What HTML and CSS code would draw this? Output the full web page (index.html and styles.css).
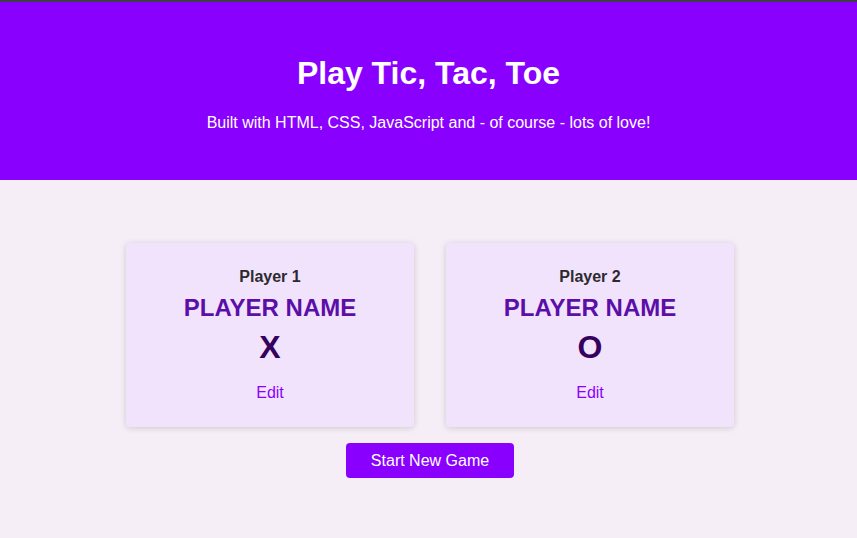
FILE: index.html
```html
<!DOCTYPE html>
<html lang="en">
<head>
<meta charset="utf-8">
<title>Tic Tac Toe</title>
<link rel="stylesheet" href="styles.css">
</head>
<body>
<header class="main-header">
  <h1 class="title">Play Tic, Tac, Toe</h1>
  <p class="subtitle">Built with HTML, CSS, JavaScript and - of course - lots of love!</p>
</header>
<main class="content">
  <ol class="players">
    <li class="player-card">
      <h2 class="player-label">Player 1</h2>
      <h3 class="player-name">PLAYER NAME</h3>
      <p class="player-symbol">X</p>
      <button class="edit-btn">Edit</button>
    </li>
    <li class="player-card">
      <h2 class="player-label">Player 2</h2>
      <h3 class="player-name">PLAYER NAME</h3>
      <p class="player-symbol">O</p>
      <button class="edit-btn">Edit</button>
    </li>
  </ol>
  <div class="actions">
    <button class="start-btn">Start New Game</button>
  </div>
</main>
</body>
</html>
```
FILE: styles.css
```css
* { box-sizing: border-box; }
html, body {
  margin: 0;
  padding: 0;
  font-family: "Liberation Sans", Arial, sans-serif;
  background: #f5eef6;
}
.main-header {
  background: #8a00ff;
  border-top: 2px solid #3f3f46;
  height: 180px;
  color: #fff;
  text-align: center;
  padding-top: 51px;
}
.title {
  margin: 0;
  font-size: 32px;
  line-height: 40px;
  font-weight: 700;
}
.subtitle {
  margin: 0;
  margin-top: 20px;
  font-size: 16px;
  line-height: 20px;
}
.content {
  padding-top: 63px;
  padding-left: 3px;
}
.players {
  list-style: none;
  margin: 0 auto;
  padding: 0;
  display: flex;
  justify-content: center;
  gap: 32px;
}
.player-card {
  width: 288px;
  height: 184px;
  background: #f2e3fd;
  border-radius: 4px;
  box-shadow: 0 1px 6px rgba(0, 0, 0, 0.16);
  text-align: center;
  padding-top: 24px;
}
.player-label {
  margin: 0;
  font-size: 16px;
  line-height: 20px;
  font-weight: 700;
  color: #2d2a2e;
}
.player-name {
  margin: 0;
  margin-top: 8px;
  font-size: 24px;
  line-height: 26px;
  font-weight: 700;
  color: #5b0fa8;
}
.player-symbol {
  margin: 0;
  margin-top: 8px;
  font-size: 32px;
  line-height: 36px;
  font-weight: 700;
  color: #35005e;
}
.edit-btn {
  margin-top: 18px;
  border: none;
  background: none;
  font: inherit;
  font-size: 16px;
  line-height: 20px;
  color: #8a00ff;
  padding: 0;
  cursor: pointer;
}
.actions {
  display: flex;
  justify-content: center;
  margin-top: 16px;
}
.start-btn {
  width: 168px;
  height: 35px;
  border: none;
  border-radius: 4px;
  background: #8a00ff;
  color: #fff;
  font: inherit;
  font-size: 16px;
  cursor: pointer;
}
```
